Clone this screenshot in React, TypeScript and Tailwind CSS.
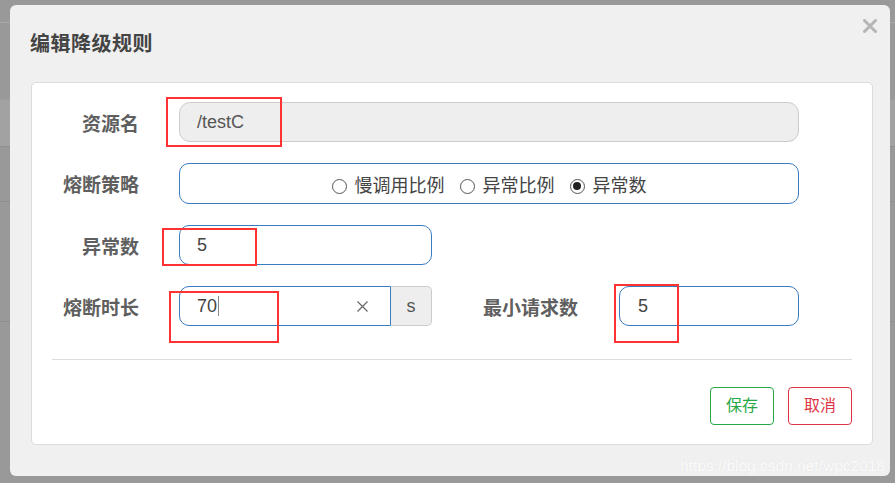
import React from 'react';

const font = { fontFamily: '"Liberation Sans", Arial, "Noto Sans CJK SC", sans-serif' };

const Radio = ({ label, checked }: { label: string; checked?: boolean }) => (
  <label className="flex items-center gap-[8px]">
    <span className="shrink-0 w-[15px] h-[15px] rounded-full border border-[#555] bg-white flex items-center justify-center">
      {checked && <span className="w-[8px] h-[8px] rounded-full bg-[#222]" />}
    </span>
    <span className="text-[18px] text-[#444]">{label}</span>
  </label>
);

const Label = ({ children }: { children: React.ReactNode }) => (
  <div className="w-[107px] shrink-0 mt-[6px] text-right text-[19px] font-bold text-[#5f5f5f]">{children}</div>
);

const App = () => {
  return (
    <div className="relative w-[895px] h-[483px] overflow-hidden bg-[#999999]" style={font}>
      {/* page behind the backdrop */}
      <div className="flex flex-col">
        <div className="h-[23px] border-b border-[#aaaaaa]" />
        <div className="h-[77px] border-b border-[#9d9d9d]" />
        <div className="h-[47px] bg-[#a2a2a2] border-b border-[#8f8f8f]" />
        <div className="h-[55px] border-b border-[#8f8f8f]" />
        <div className="h-[120px] border-b border-[#8f8f8f]" />
      </div>

      {/* modal */}
      <div className="absolute left-[10px] top-[5px] w-[880px] h-[471px] rounded-[6px] bg-[#f0f0f0] flex flex-col">
        <div className="h-[77px] pl-[20px] pr-[13px] flex items-center justify-between">
          <h3 className="text-[20px] font-bold text-[#444] tracking-[0.5px]">编辑降级规则</h3>
          <svg width="14" height="14" viewBox="0 0 14 14" className="-mt-[36px]">
            <path d="M1.5 1.5 L12.5 12.5 M12.5 1.5 L1.5 12.5" stroke="#b5b5b5" strokeWidth="3" strokeLinecap="round" />
          </svg>
        </div>

        <div className="ml-[21px] w-[842px] h-[363px] bg-white border border-[#dcdcdc] rounded-[5px] pt-[19px] px-[20px] flex flex-col">
          <div className="flex flex-col gap-[21px]">
            <div className="flex items-center -ml-[20px]">
              <Label>资源名</Label>
              <div className="ml-[40px] w-[620px] h-[40px] rounded-[11px] border border-[#cccccc] bg-[#eeeeee] flex items-center px-[17px] text-[18px] text-[#555]">
                /testC
              </div>
            </div>

            <div className="flex items-center -ml-[20px]">
              <Label>熔断策略</Label>
              <div className="ml-[40px] w-[620px] h-[41px] pt-[5px] rounded-[10px] border border-[#3a7cc0] flex items-center justify-center gap-[15px]">
                <Radio label="慢调用比例" />
                <Radio label="异常比例" />
                <Radio label="异常数" checked />
              </div>
            </div>

            <div className="flex items-center -ml-[20px]">
              <Label>异常数</Label>
              <div className="ml-[40px] w-[253px] h-[40px] rounded-[10px] border border-[#3a7cc0] flex items-center px-[17px] text-[18px] text-[#444]">
                5
              </div>
            </div>

            <div className="flex items-center -ml-[20px]">
              <Label>熔断时长</Label>
              <div className="ml-[40px] flex h-[40px]">
                <div className="w-[212px] rounded-l-[10px] border border-[#3a7cc0] flex items-center pl-[17px] pr-[22px] text-[18px] text-[#444]">
                  <span>70</span>
                  <span className="w-px h-[20px] bg-[#888] ml-[1px]" />
                  <svg width="11" height="11" viewBox="0 0 11 11" className="ml-auto">
                    <path d="M0.5 0.5 L10.5 10.5 M10.5 0.5 L0.5 10.5" stroke="#666" strokeWidth="1.2" />
                  </svg>
                </div>
                <div className="w-[41px] rounded-r-[5px] border border-l-0 border-[#cccccc] bg-[#eeeeee] flex items-center justify-center text-[18px] text-[#555]">
                  s
                </div>
              </div>
              <div className="ml-[51px] mt-[6px] w-[100px] text-[19px] font-bold text-[#5f5f5f]">最小请求数</div>
              <div className="ml-[36px] w-[180px] h-[40px] rounded-[10px] border border-[#3a7cc0] flex items-center px-[18px] text-[18px] text-[#444]">
                5
              </div>
            </div>
          </div>

          <div className="mt-[33px] border-t border-[#dddddd]" />

          <div className="mt-[27px] flex justify-end gap-[14px]">
            <button className="w-[64px] h-[38px] rounded-[4px] border border-[#28a745] text-[#28a745] text-[16px] bg-white">
              保存
            </button>
            <button className="w-[64px] h-[38px] rounded-[4px] border border-[#dc3545] text-[#dc3545] text-[16px] bg-white">
              取消
            </button>
          </div>
        </div>
      </div>

      {/* red annotation boxes */}
      <div className="absolute left-[166px] top-[97px] w-[116px] h-[50px] border-2 border-[#ff3333]" />
      <div className="absolute left-[162px] top-[228px] w-[95px] h-[38px] border-2 border-[#ff3333]" />
      <div className="absolute left-[169px] top-[291px] w-[110px] h-[52px] border-2 border-[#ff3333]" />
      <div className="absolute left-[614px] top-[284px] w-[65px] h-[59px] border-2 border-[#ff3333]" />

      {/* watermark */}
      <div className="absolute right-[10px] top-[454px] text-[15.5px] text-[#fbfbfb] [text-shadow:0_0_1px_#e0e0e0]">
        https://blog.csdn.net/wpc2018
      </div>
    </div>
  );
};

export default App;
